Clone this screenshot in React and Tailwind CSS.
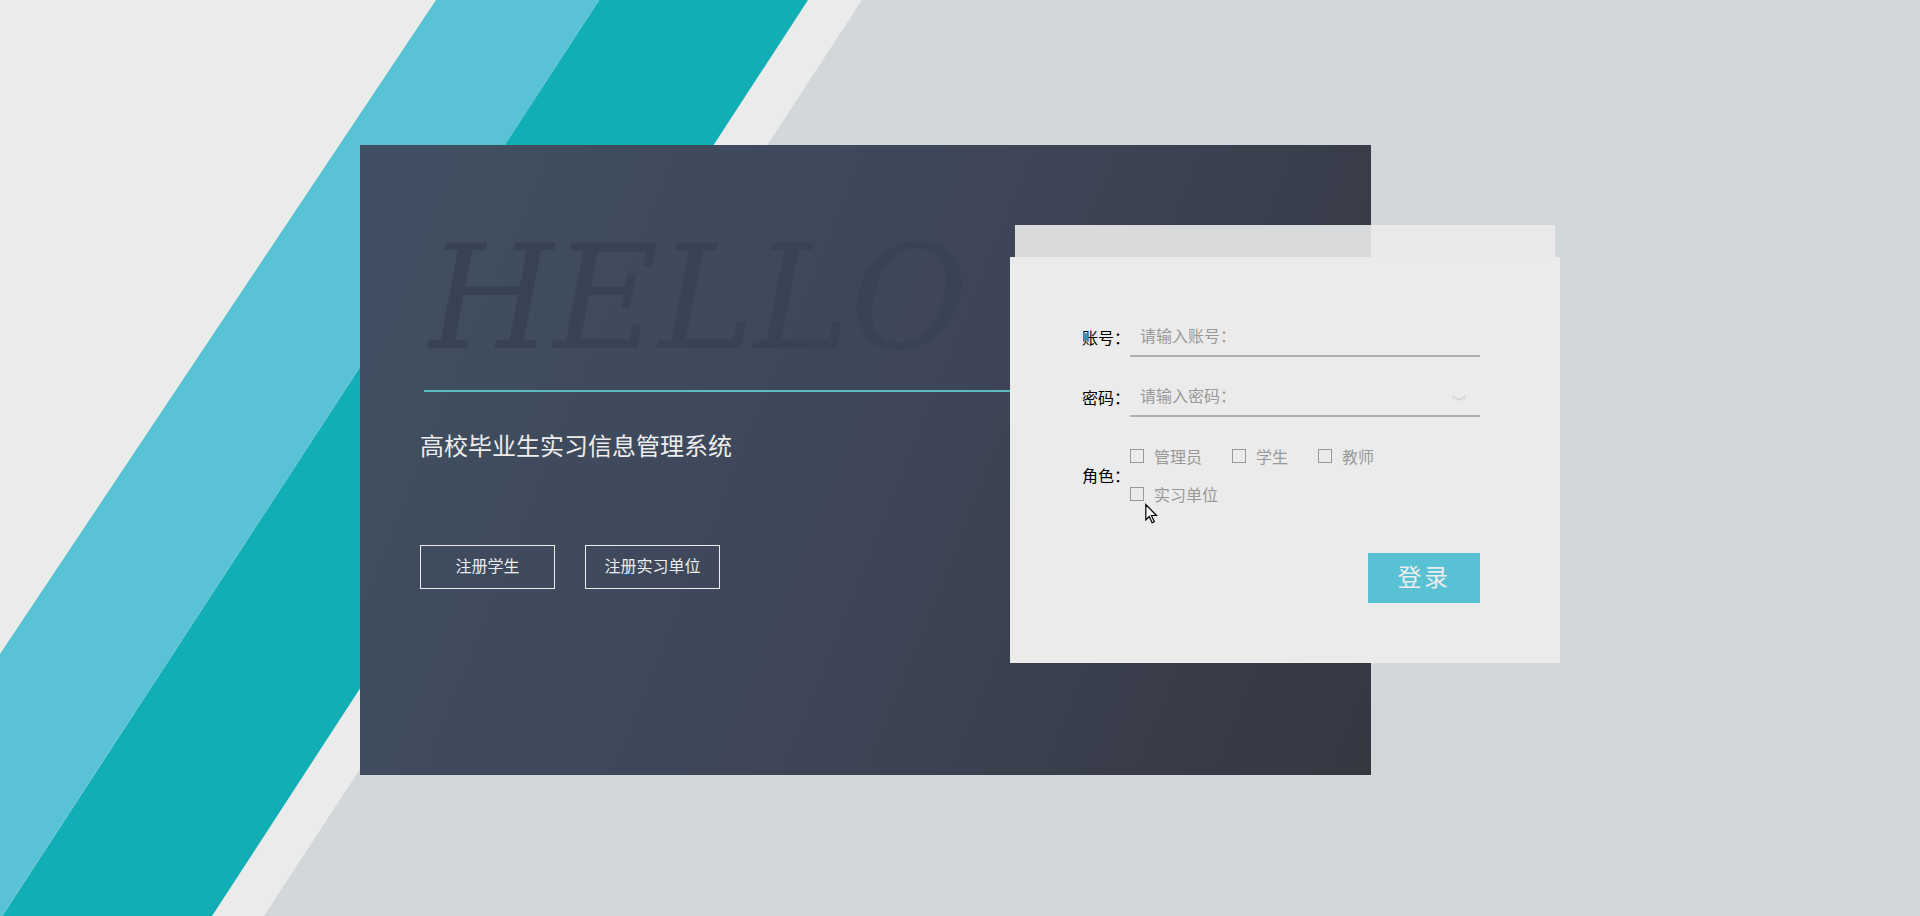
import clsx from "clsx";
import React, { useState } from "react";

const ROLES = ["管理员", "学生", "教师", "实习单位"];

const App = () => {
  return (
    <div className="relative min-h-screen overflow-hidden bg-[#ebebeb] font-['Noto_Sans_CJK_SC',sans-serif] text-base">
      <Stripes />
      <main className="relative mx-auto flex w-full max-w-[1200px] items-start pt-[145px] pb-20">
        <WelcomePanel />
        <LoginCard />
      </main>
    </div>
  );
};

const Stripes = () => (
  <svg
    aria-hidden="true"
    className="absolute inset-0 size-full"
    preserveAspectRatio="xMinYMin slice"
    viewBox="0 0 1920 916"
  >
    <polygon fill="#59c3d5" points="436,0 600,0 2,916 0,916 0,654" />
    <polygon fill="#12aeb6" points="599,0 808,0 212,916 2,916" />
    <polygon fill="#d2d7da" points="862,0 1920,0 1920,916 264,916" />
    <line stroke="#86d3dc" strokeWidth="0.7" x1="599" x2="2" y1="0" y2="916" />
  </svg>
);

const WelcomePanel = () => (
  <section className="min-h-[630px] flex-1 bg-linear-[112deg] from-[#405062] via-[#3e4658] to-[#363741] px-15 pt-[81px] text-[#ededed]">
    <p className="ml-2 w-fit bg-linear-to-r from-[#384252] to-[#3a4354] bg-clip-text pr-4 font-['DejaVu_Serif',serif] text-[144px] leading-none text-transparent italic">
      HELLO
    </p>
    <hr className="mt-5 ml-1 border-t-2 border-[#5bbcc0]" />
    <h1 className="mt-9 text-2xl leading-[34px]">高校毕业生实习信息管理系统</h1>
    <div className="mt-[83px] flex gap-[30px]">
      <RegisterButton>注册学生</RegisterButton>
      <RegisterButton>注册实习单位</RegisterButton>
    </div>
  </section>
);

const RegisterButton = ({ children }) => (
  <button
    className="h-11 w-[135px] cursor-pointer border border-[#ededed] pb-1 hover:bg-white/10"
    type="button"
  >
    {children}
  </button>
);

const LoginCard = () => {
  const [roles, setRoles] = useState([]);

  const toggleRole = (role) => {
    setRoles((current) =>
      current.includes(role)
        ? current.filter((item) => item !== role)
        : [...current, role],
    );
  };

  return (
    <div className="mt-20 -ml-[361px] w-[550px]">
      <div className="mx-[5px] h-8 bg-[#ebebeb]/90" />
      <form
        className="bg-[#ebebeb] py-15 pr-20 pl-[72px]"
        onSubmit={(e) => e.preventDefault()}
      >
        <Field id="account" label="账号：" placeholder="请输入账号：" />
        <Field
          className="mt-5"
          icon={<ClosedEye />}
          id="password"
          label="密码："
          placeholder="请输入密码："
          type="password"
        />
        <fieldset className="mt-5">
          <div className="flex items-center">
            <span className="w-12 shrink-0 text-black" id="role-label">
              角色：
            </span>
            <div
              aria-labelledby="role-label"
              className="relative flex flex-1 flex-wrap gap-x-[30px]"
              role="group"
            >
              {ROLES.map((role) => (
                <label
                  className="flex h-[38px] cursor-pointer items-center gap-2.5 text-[#999]"
                  key={role}
                >
                  <input
                    checked={roles.includes(role)}
                    className="size-3.5 appearance-none border border-[#999] checked:bg-[#59c3d5]"
                    onChange={() => toggleRole(role)}
                    type="checkbox"
                  />
                  {role}
                </label>
              ))}
              <Pointer />
            </div>
          </div>
        </fieldset>
        <div className="mt-10 flex justify-end">
          <button
            className="h-[50px] w-28 cursor-pointer bg-[#59c1d4] pb-1 text-2xl tracking-widest text-[#ededed] hover:brightness-95"
            type="submit"
          >
            登录
          </button>
        </div>
      </form>
    </div>
  );
};

const Field = ({ className, icon, id, label, placeholder, type = "text" }) => (
  <div className={clsx("flex items-center", className)}>
    <label className="w-12 shrink-0 text-black" htmlFor={id}>
      {label}
    </label>
    <div className="flex h-10 flex-1 items-center border-b-2 border-[#afafaf] pr-3.5 pl-2.5">
      <input
        className="h-full min-w-0 flex-1 bg-transparent pb-0.5 outline-none placeholder:text-[#999]"
        id={id}
        placeholder={placeholder}
        type={type}
      />
      {icon}
    </div>
  </div>
);

const ClosedEye = () => (
  <svg
    aria-hidden="true"
    className="mt-1 size-3.5"
    fill="none"
    stroke="#d6d6d6"
    strokeLinecap="round"
    strokeWidth="1.5"
    viewBox="0 0 14 14"
  >
    <path d="M1 4.8C2.3 7 4.4 8.2 7 8.2s4.7-1.2 6-3.4" />
    <path d="M2.4 6.5 1.6 7.4M5.4 8l-.3 1M8.6 8l.3 1M11.6 6.5l.8.9" />
  </svg>
);

const Pointer = () => (
  <svg
    aria-hidden="true"
    className="pointer-events-none absolute top-[66px] left-[15px] h-[22px] w-3.5"
    viewBox="0 0 14 22"
  >
    <path
      d="M.8 1.5v15.3l3.5-3.3 2.8 6.3 2.2-1-2.8-6.3h5z"
      fill="#f4f4f4"
      stroke="#000"
      strokeWidth="1.2"
    />
  </svg>
);

export default App;
